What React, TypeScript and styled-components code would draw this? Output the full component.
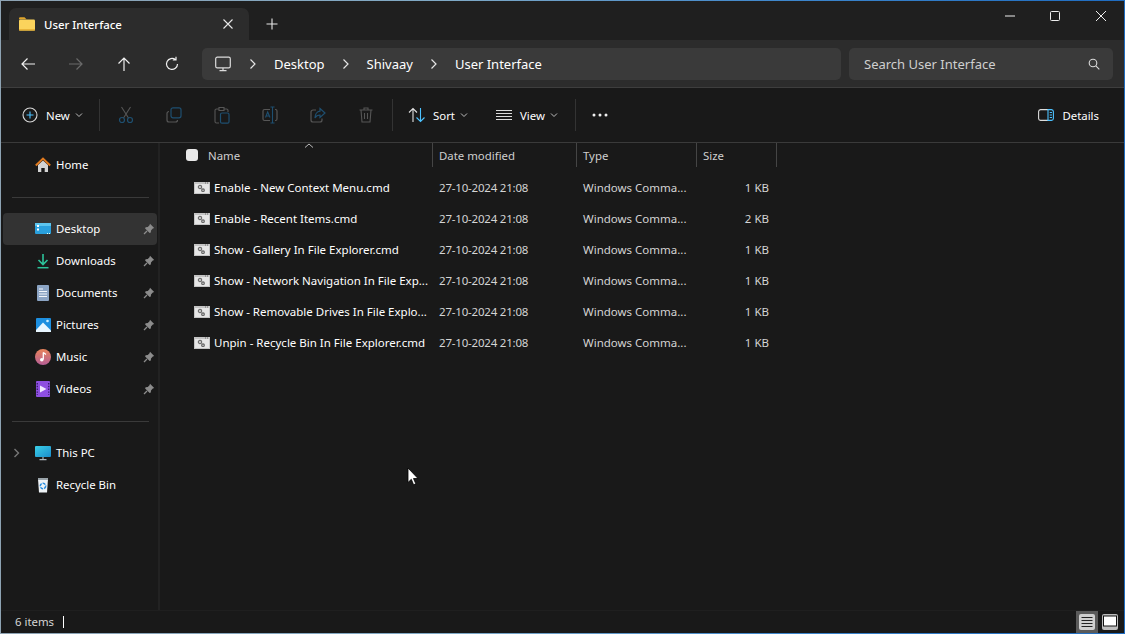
import React from "react";
import styled, { createGlobalStyle } from "styled-components";

const Global = createGlobalStyle`
  html, body { margin: 0; padding: 0; background: #191919; }
  * { box-sizing: border-box; }
`;

/* ---------------- Shell ---------------- */

const Win = styled.div`
  position: relative;
  width: 1125px;
  height: 634px;
  display: flex;
  flex-direction: column;
  overflow: hidden;
  background: #191919;
  color: #fff;
  font-family: "Noto Sans", "Liberation Sans", sans-serif;
  font-size: 11.4px;
  border-style: solid;
  border-width: 1px;
  border-image: linear-gradient(90deg, #8ea3b3 0%, #7fa9c6 40%, #3d86cc 70%, #1f6cc0 100%) 1;
`;

const Svg = styled.svg`
  display: block;
  flex: none;
  fill: none;
`;

/* ---------------- Title bar ---------------- */

const TitleBar = styled.div`
  height: 39px;
  flex: none;
  display: flex;
  align-items: flex-end;
  padding-left: 8px;
  background: #1f1f1f;
`;

const Tab = styled.div`
  width: 240px;
  height: 32px;
  display: flex;
  align-items: center;
  padding: 0 15px 0 9px;
  gap: 8px;
  background: #2c2c2c;
  border-radius: 7px 7px 0 0;
  font-weight: 500;
  span { flex: 1; }
`;

const NewTab = styled.div`
  width: 46px;
  height: 32px;
  display: flex;
  align-items: center;
  justify-content: center;
`;

const WinControls = styled.div`
  margin-left: auto;
  align-self: flex-start;
  display: flex;
  height: 30px;
  align-items: center;
`;

const WinBtn = styled.div<{ $w: number }>`
  width: ${(p) => p.$w}px;
  display: flex;
  justify-content: center;
`;

/* ---------------- Address bar ---------------- */

const AddressBar = styled.div`
  height: 48px;
  flex: none;
  display: flex;
  align-items: center;
  background: #2c2c2c;
  border-bottom: 1px solid #3e3e3e;
  padding: 1px 11px 0 3px;
`;

const NavBtn = styled.div`
  width: 48px;
  display: flex;
  justify-content: center;
`;

const Crumbs = styled.div`
  width: 639px;
  height: 32px;
  margin-left: 6px;
  display: flex;
  align-items: center;
  padding-left: 13px;
  background: #3a3a3a;
  border-radius: 5px;
  font-size: 13px;
`;

const PcGlyph = styled.div`
  margin-right: 18px;
`;

const CrumbText = styled.span`
  margin: 0 17px;
  white-space: nowrap;
`;

const Search = styled.div`
  flex: 1;
  height: 32px;
  margin-left: 8px;
  display: flex;
  align-items: center;
  justify-content: space-between;
  padding: 0 13px 0 15px;
  background: #3a3a3a;
  border-radius: 5px;
  color: #cfcfcf;
  font-size: 13px;
`;

/* ---------------- Command bar ---------------- */

const CommandBar = styled.div`
  height: 55px;
  flex: none;
  display: flex;
  align-items: center;
  background: #191919;
  border-bottom: 1px solid #3a3a3a;
  padding: 0 25px 0 5px;
`;

const Cmd = styled.div<{ $w: number; $pad?: number; $gap?: number }>`
  width: ${(p) => p.$w}px;
  display: flex;
  align-items: center;
  justify-content: ${(p) => (p.$pad ? "flex-start" : "center")};
  padding-left: ${(p) => p.$pad ?? 0}px;
  gap: ${(p) => p.$gap ?? 8}px;
`;

const CmdLabel = styled.span`
  display: flex;
  align-items: center;
  gap: 5px;
`;

const Sep = styled.div`
  width: 1px;
  height: 32px;
  margin: 0 2px;
  background: #333;
`;

const Details = styled.div`
  margin-left: auto;
  display: flex;
  align-items: center;
  gap: 8px;
`;

/* ---------------- Body ---------------- */

const Body = styled.div`
  flex: 1;
  display: flex;
  min-height: 0;
`;

const Sidebar = styled.div`
  width: 159px;
  flex: none;
  padding: 6px 1px 0 2px;
  border-right: 2px solid #222;
`;

const NavItem = styled.div<{ $active?: boolean }>`
  position: relative;
  height: 32px;
  display: flex;
  align-items: center;
  padding-left: 30px;
  gap: 3px;
  border-radius: 4px;
  background: ${(p) => (p.$active ? "#333" : "transparent")};
`;

const IconSlot = styled.div`
  width: 20px;
  display: flex;
  justify-content: center;
`;

const Caret = styled.div`
  position: absolute;
  left: 10px;
  top: 11px;
`;

const NavLabel = styled.span`
  flex: 1;
  padding-bottom: 2px;
`;

const PinSlot = styled.div`
  width: 14px;
`;

const NavRule = styled.div`
  height: 1px;
  margin: 16px 8px 15px 9px;
  background: #3a3a3a;
`;

const Content = styled.div`
  flex: 1;
  min-width: 0;
`;

const Grid = styled.div`
  display: grid;
  grid-template-columns: 273px 144px 120px 80px;
  width: 617px;
`;

const HeaderCell = styled.div<{ $pad: number }>`
  position: relative;
  height: 24px;
  display: flex;
  align-items: center;
  padding-left: ${(p) => p.$pad}px;
  border-right: 1px solid #454545;
  color: #cfcfcf;
`;

const SortUp = styled.div`
  position: absolute;
  left: 144px;
  top: 0;
`;

const Check = styled.div`
  width: 12px;
  height: 12px;
  margin-right: 10px;
  background: #e8e8e8;
  border-radius: 3px;
`;

const Rows = styled.div`
  padding-top: 5px;
  font-size: 11.5px;
`;

const Row = styled.div`
  display: grid;
  grid-template-columns: 273px 144px 120px 72px;
  width: 617px;
  height: 31px;
  align-items: center;
`;

const NameCell = styled.div`
  display: flex;
  align-items: center;
  gap: 4px;
  padding-left: 34px;
  white-space: nowrap;
`;

const Cell = styled.div<{ $right?: boolean; $tight?: boolean }>`
  padding-left: 6px;
  color: #d4d4d4;
  white-space: nowrap;
  text-align: ${(p) => (p.$right ? "right" : "left")};
  letter-spacing: ${(p) => (p.$tight ? "-0.2px" : "0")};
`;

const StatusBar = styled.div`
  height: 23px;
  flex: none;
  display: flex;
  align-items: center;
  padding: 0 3px 0 14px;
  background: #191919;
  color: #d4d4d4;
  border-top: 1px solid #1f1f1f;
`;

const StatusText = styled.span`
  padding-bottom: 2px;
`;

const StatusBarMark = styled.div`
  width: 1px;
  height: 12px;
  margin-left: 9px;
  background: #fff;
`;

const ViewSwitch = styled.div`
  margin-left: auto;
  display: flex;
  align-items: center;
  gap: 1px;
`;

const ViewBtn = styled.div<{ $on?: boolean }>`
  width: 22px;
  height: 22px;
  display: flex;
  align-items: center;
  justify-content: center;
  background: ${(p) => (p.$on ? "#5a5a5a" : "transparent")};
`;

const Pointer = styled.div`
  position: absolute;
  left: 406px;
  top: 466px;
`;

/* ---------------- Icons ---------------- */

const Chevron = ({ color = "#bdbdbd" }: { color?: string }) => (
  <Svg width="8" height="6" viewBox="0 0 8 6">
    <path d="M1 1.5 4 4.5 7 1.5" stroke={color} strokeWidth="1" />
  </Svg>
);

const Crumb = () => (
  <Svg width="8" height="12" viewBox="0 0 8 12">
    <path d="M1.5 1.5 6 6 1.5 10.5" stroke="#e6e6e6" strokeWidth="1.2" />
  </Svg>
);

const Arrow = ({ d, color = "#f0f0f0" }: { d: string; color?: string }) => (
  <Svg width="16" height="16" viewBox="0 0 16 16">
    <path d={d} stroke={color} strokeWidth="1.2" />
  </Svg>
);

const FolderIcon = () => (
  <Svg width="18" height="16" viewBox="0 0 18 16">
    <path d="M1 2.5A1.2 1.2 0 0 1 2.2 1.3h4.3l2 2H1Z" fill="#e0a52a" />
    <rect x="1" y="3.5" width="16" height="11" rx="1.2" fill="#fbd35c" />
    <rect x="1" y="13" width="16" height="1.6" fill="#e8b338" />
  </Svg>
);

const Pin = () => (
  <Svg width="12" height="12" viewBox="0 0 12 12">
    <path d="M7 .8 11.2 5 9.8 5.6 8 7.4 7.8 9.6 6.6 10 2.1 5.4 2.6 4.2 4.8 4 6.5 2.2Z" fill="#8c8c8c" />
    <path d="M4 8 1 11" stroke="#8c8c8c" strokeWidth="1.3" />
  </Svg>
);

const HomeIcon = () => (
  <Svg width="16" height="16" viewBox="0 0 16 16">
    <path d="M3 8 8 3.5 13 8V15H9.7V11H6.3V15H3Z" fill="#d4d4d4" />
    <path d="M.8 8.4 8 1.6 15.2 8.4" stroke="#e07a1f" strokeWidth="2" />
  </Svg>
);

const DesktopIcon = () => (
  <Svg width="16" height="14" viewBox="0 0 16 14">
    <rect y="1" width="16" height="11" rx="1" fill="#2aa0dd" />
    <rect y="1" width="16" height="3" fill="#5cc4ee" />
    <rect x="2" y="3" width="2" height="2" fill="#fff" />
    <rect x="2" y="6.5" width="2" height="2" fill="#fff" />
    <rect x="12" y="11" width="1" height="1" fill="#dff" />
    <rect x="14" y="11" width="1" height="1" fill="#dff" />
  </Svg>
);

const DownloadIcon = () => (
  <Svg width="16" height="16" viewBox="0 0 16 16">
    <path d="M8 1V11M3.5 7 8 11.5 12.5 7" stroke="#2cc39a" strokeWidth="1.6" />
    <path d="M2.5 14.7H13.5" stroke="#2cc39a" strokeWidth="1.5" />
  </Svg>
);

const DocumentIcon = () => (
  <Svg width="16" height="16" viewBox="0 0 16 16">
    <rect x="2" width="12" height="16" rx="1" fill="#8ba4c4" />
    <path d="M4 4H8M4 6.5H12M4 9H12M4 11.5H12" stroke="#f2f6fb" strokeWidth="1.1" />
  </Svg>
);

const PicturesIcon = () => (
  <Svg width="15" height="14" viewBox="0 0 15 14">
    <rect width="15" height="14" rx="1" fill="#1d8fe0" />
    <path d="M0 12 7 4.5 15 12.5V14H0Z" fill="#e8f6ff" />
    <circle cx="11.5" cy="3" r="1.3" fill="#cdeeff" />
  </Svg>
);

const MusicIcon = () => (
  <Svg width="16" height="16" viewBox="0 0 16 16">
    <defs>
      <linearGradient id="mus" x1="0" y1="0" x2="0" y2="1">
        <stop offset="0" stopColor="#e8835a" />
        <stop offset="1" stopColor="#b65f96" />
      </linearGradient>
    </defs>
    <circle cx="8" cy="8" r="8" fill="url(#mus)" />
    <path d="M8.3 3.5V10.5" stroke="#fff" strokeWidth="1.3" />
    <path d="M8.3 3.5 11 5.5" stroke="#fff" strokeWidth="1.3" />
    <circle cx="6.8" cy="10.8" r="1.8" fill="#fff" />
  </Svg>
);

const VideoIcon = () => (
  <Svg width="14" height="16" viewBox="0 0 14 16">
    <rect width="14" height="16" rx="1" fill="#8e4fe0" />
    <path d="M4 4.5 10.5 8 4 11.5Z" fill="#f0e8ff" />
    <path d="M1.3 2V14M12.7 2V14" stroke="#3a1f70" strokeWidth="1.4" strokeDasharray="1.4 1.4" />
  </Svg>
);

const PcIcon = () => (
  <Svg width="16" height="16" viewBox="0 0 16 16">
    <defs>
      <linearGradient id="pc" x1="0" y1="0" x2="1" y2="1">
        <stop offset="0" stopColor="#3bd0e8" />
        <stop offset="1" stopColor="#1a8ccc" />
      </linearGradient>
    </defs>
    <rect y="1" width="16" height="11" rx="1" fill="url(#pc)" />
    <path d="M8 12V14.5M4.5 14.7H11.5" stroke="#aab4bb" strokeWidth="1.2" />
  </Svg>
);

const BinIcon = () => (
  <Svg width="14" height="16" viewBox="0 0 14 16">
    <path d="M2 2H12L11 15.5H3Z" fill="#eef2f5" />
    <rect x="2" y="1" width="10" height="2" fill="#9aa4aa" />
    <circle cx="7" cy="9" r="2.7" stroke="#2a8fe0" strokeWidth="1.5" strokeDasharray="3 1" />
  </Svg>
);

const CmdFile = () => (
  <Svg width="16" height="12" viewBox="0 0 16 12">
    <rect width="16" height="12" fill="#c4c4c4" />
    <rect x="1" y="2" width="14" height="9" fill="#e6e6e6" />
    <rect x="11" y=".5" width="1" height="1" fill="#666" />
    <rect x="13" y=".5" width="1" height="1" fill="#666" />
    <circle cx="6" cy="5" r="1.6" stroke="#6e6e6e" strokeWidth="1.3" />
    <circle cx="9" cy="8.2" r="1.3" stroke="#5f5f5f" strokeWidth="1.2" />
  </Svg>
);

const files = [
  ["Enable - New Context Menu.cmd", "1 KB"],
  ["Enable - Recent Items.cmd", "2 KB"],
  ["Show - Gallery In File Explorer.cmd", "1 KB"],
  ["Show - Network Navigation In File Exp...", "1 KB"],
  ["Show - Removable Drives In File Explo...", "1 KB"],
  ["Unpin - Recycle Bin In File Explorer.cmd", "1 KB"],
];

const places: [string, React.ReactNode][] = [
  ["Desktop", <DesktopIcon />],
  ["Downloads", <DownloadIcon />],
  ["Documents", <DocumentIcon />],
  ["Pictures", <PicturesIcon />],
  ["Music", <MusicIcon />],
  ["Videos", <VideoIcon />],
];

const blue = "#1e4f70";
const gray = "#565656";

export default function App() {
  return (
    <Win>
      <Global />

      <TitleBar>
        <Tab>
          <FolderIcon />
          <span>User Interface</span>
          <Svg width="12" height="12" viewBox="0 0 12 12">
            <path d="M1.5 1.5 10.5 10.5M10.5 1.5 1.5 10.5" stroke="#e8e8e8" strokeWidth="1.1" />
          </Svg>
        </Tab>
        <NewTab>
          <Svg width="12" height="12" viewBox="0 0 12 12">
            <path d="M6 .5V11.5M.5 6H11.5" stroke="#e8e8e8" strokeWidth="1.1" />
          </Svg>
        </NewTab>
        <WinControls>
          <WinBtn $w={44}>
            <Svg width="12" height="12" viewBox="0 0 12 12">
              <path d="M1 6H11" stroke="#eee" strokeWidth="1" />
            </Svg>
          </WinBtn>
          <WinBtn $w={46}>
            <Svg width="12" height="12" viewBox="0 0 12 12">
              <rect x="1.5" y="1.5" width="9" height="9" rx="1" stroke="#eee" />
            </Svg>
          </WinBtn>
          <WinBtn $w={46}>
            <Svg width="12" height="12" viewBox="0 0 12 12">
              <path d="M1 1 11 11M11 1 1 11" stroke="#eee" strokeWidth="1" />
            </Svg>
          </WinBtn>
        </WinControls>
      </TitleBar>

      <AddressBar>
        <NavBtn>
          <Arrow d="M15 8H2M7.5 2.5 2 8 7.5 13.5" />
        </NavBtn>
        <NavBtn>
          <Arrow d="M1 8H14M8.5 2.5 14 8 8.5 13.5" color="#6a6a6a" />
        </NavBtn>
        <NavBtn>
          <Arrow d="M8 15V2M2.5 7.5 8 2 13.5 7.5" />
        </NavBtn>
        <NavBtn>
          <Arrow d="M13.5 8A5.5 5.5 0 1 1 11.5 3.7M12 .8V4H8.8" />
        </NavBtn>
        <Crumbs>
          <PcGlyph>
            <Svg width="16" height="16" viewBox="0 0 16 16">
              <rect x=".7" y="1.2" width="14.6" height="10.6" rx="1.6" stroke="#dcdcdc" strokeWidth="1.2" />
              <path d="M8 12V14.5M4.5 14.6H11.5" stroke="#dcdcdc" strokeWidth="1.2" />
            </Svg>
          </PcGlyph>
          <Crumb />
          <CrumbText>Desktop</CrumbText>
          <Crumb />
          <CrumbText>Shivaay</CrumbText>
          <Crumb />
          <CrumbText>User Interface</CrumbText>
        </Crumbs>
        <Search>
          <span>Search User Interface</span>
          <Svg width="12" height="12" viewBox="0 0 12 12">
            <circle cx="5" cy="5" r="3.8" stroke="#dcdcdc" strokeWidth="1.1" />
            <path d="M7.8 7.8 11.3 11.3" stroke="#dcdcdc" strokeWidth="1.1" />
          </Svg>
        </Search>
      </AddressBar>

      <CommandBar>
        <Cmd $w={91} $pad={16}>
          <Svg width="16" height="16" viewBox="0 0 16 16">
            <circle cx="8" cy="8" r="7" stroke="#d8d8d8" strokeWidth="1.1" />
            <path d="M8 4.5V11.5M4.5 8H11.5" stroke="#4cc2ff" strokeWidth="1.1" />
          </Svg>
          <CmdLabel>
            New
            <Chevron />
          </CmdLabel>
        </Cmd>
        <Sep />
        <Cmd $w={48}>
          <Svg width="16" height="18" viewBox="0 0 16 18">
            <path d="M3.5 1 10.5 12M12.5 1 5.5 12" stroke={gray} strokeWidth="1.1" />
            <circle cx="4" cy="14" r="2.5" stroke={blue} strokeWidth="1.2" />
            <circle cx="12" cy="14" r="2.5" stroke={blue} strokeWidth="1.2" />
          </Svg>
        </Cmd>
        <Cmd $w={48}>
          <Svg width="16" height="16" viewBox="0 0 16 16">
            <rect x="5" y=".8" width="10" height="10" rx="2" stroke={blue} strokeWidth="1.2" />
            <path d="M3 4.5A2 2 0 0 0 1 6.5V13A2 2 0 0 0 3 15H9.5A2 2 0 0 0 11.5 13" stroke={gray} strokeWidth="1.2" />
          </Svg>
        </Cmd>
        <Cmd $w={48}>
          <Svg width="16" height="18" viewBox="0 0 16 18">
            <path d="M5 3H2.5A1.5 1.5 0 0 0 1 4.5V15.5A1.5 1.5 0 0 0 2.5 17H5M5 1.5H10V4.5H5ZM10 3H12.5A1.5 1.5 0 0 1 14 4.5V6" stroke={gray} strokeWidth="1.1" />
            <rect x="6.5" y="7" width="8.5" height="10.2" rx="1.5" stroke={blue} strokeWidth="1.2" />
          </Svg>
        </Cmd>
        <Cmd $w={48}>
          <Svg width="16" height="18" viewBox="0 0 16 18">
            <path d="M8 3.5H2.5A1.5 1.5 0 0 0 1 5V13A1.5 1.5 0 0 0 2.5 14.5H8" stroke={gray} strokeWidth="1.2" />
            <path d="M13 3.5H13.5A1.5 1.5 0 0 1 15 5V13A1.5 1.5 0 0 1 13.5 14.5H13" stroke={gray} strokeWidth="1.2" />
            <path d="M8.5 1H12.5M10.5 1V17M8.5 17H12.5M3.5 11.5 5.7 6 8 11.5M4.3 10H7.2" stroke={blue} strokeWidth="1.1" />
          </Svg>
        </Cmd>
        <Cmd $w={48}>
          <Svg width="16" height="16" viewBox="0 0 16 16">
            <path d="M6 3H3A2 2 0 0 0 1 5V13A2 2 0 0 0 3 15H10A2 2 0 0 0 12 13V11.5" stroke={gray} strokeWidth="1.2" />
            <path d="M10 1.5 15 6 10 10.5V8C7.5 8 6 9 5 11 5 7.5 7 4.5 10 4.2Z" stroke={blue} strokeWidth="1.2" />
          </Svg>
        </Cmd>
        <Cmd $w={48}>
          <Svg width="14" height="16" viewBox="0 0 14 16">
            <path d="M.5 3H13.5M5 3V1H9V3M2 3 3 15H11L12 3M5.5 6V12M8.5 6V12" stroke={gray} strokeWidth="1.1" />
          </Svg>
        </Cmd>
        <Sep />
        <Cmd $w={88} $pad={13} $gap={7}>
          <Svg width="18" height="16" viewBox="0 0 18 16">
            <path d="M5 15V1.5M1 5.5 5 1.5 9 5.5" stroke="#e0e0e0" strokeWidth="1.1" />
            <path d="M12.5 1V14.5M8.5 10.5 12.5 14.5 16.5 10.5" stroke="#4cc2ff" strokeWidth="1.1" />
          </Svg>
          <CmdLabel>
            Sort
            <Chevron />
          </CmdLabel>
        </Cmd>
        <Cmd $w={90} $pad={13}>
          <Svg width="16" height="12" viewBox="0 0 16 12">
            <path d="M0 1.5H16M0 4.5H16M0 7.5H16M0 10.5H16" stroke="#dcdcdc" strokeWidth="1" />
          </Svg>
          <CmdLabel>
            View
            <Chevron />
          </CmdLabel>
        </Cmd>
        <Sep />
        <Cmd $w={44}>
          <Svg width="16" height="4" viewBox="0 0 16 4">
            <circle cx="2" cy="2" r="1.5" fill="#f0f0f0" />
            <circle cx="8" cy="2" r="1.5" fill="#f0f0f0" />
            <circle cx="14" cy="2" r="1.5" fill="#f0f0f0" />
          </Svg>
        </Cmd>
        <Details>
          <Svg width="16" height="12" viewBox="0 0 16 12">
            <path d="M10 .6H2.5A2 2 0 0 0 .6 2.5V9.5A2 2 0 0 0 2.5 11.4H10" stroke="#dcdcdc" strokeWidth="1.1" />
            <path d="M10 .6H13.5A2 2 0 0 1 15.4 2.5V9.5A2 2 0 0 1 13.5 11.4H10V.6ZM11.7 3.5H14M11.7 6H14M11.7 8.5H14" stroke="#4cc2ff" strokeWidth="1.1" />
          </Svg>
          <span>Details</span>
        </Details>
      </CommandBar>

      <Body>
        <Sidebar>
          <NavItem>
            <IconSlot><HomeIcon /></IconSlot>
            <NavLabel>Home</NavLabel>
          </NavItem>
          <NavRule />
          {places.map(([label, icon], i) => (
            <NavItem key={label} $active={i === 0}>
              <IconSlot>{icon}</IconSlot>
              <NavLabel>{label}</NavLabel>
              <PinSlot><Pin /></PinSlot>
            </NavItem>
          ))}
          <NavRule />
          <NavItem>
            <Caret>
              <Svg width="8" height="10" viewBox="0 0 8 10">
                <path d="M1.5 1 5.5 5 1.5 9" stroke="#777" strokeWidth="1.4" />
              </Svg>
            </Caret>
            <IconSlot><PcIcon /></IconSlot>
            <NavLabel>This PC</NavLabel>
          </NavItem>
          <NavItem>
            <IconSlot><BinIcon /></IconSlot>
            <NavLabel>Recycle Bin</NavLabel>
          </NavItem>
        </Sidebar>

        <Content>
          <Grid>
            <HeaderCell $pad={26}>
              <SortUp>
                <Svg width="10" height="5" viewBox="0 0 10 5">
                  <path d="M1 4.5 5 1 9 4.5" stroke="#bbb" />
                </Svg>
              </SortUp>
              <Check />
              Name
            </HeaderCell>
            <HeaderCell $pad={6}>Date modified</HeaderCell>
            <HeaderCell $pad={6}>Type</HeaderCell>
            <HeaderCell $pad={6}>Size</HeaderCell>
          </Grid>
          <Rows>
            {files.map(([name, size]) => (
              <Row key={name}>
                <NameCell>
                  <CmdFile />
                  {name}
                </NameCell>
                <Cell $tight>27-10-2024 21:08</Cell>
                <Cell>Windows Comma...</Cell>
                <Cell $right>{size}</Cell>
              </Row>
            ))}
          </Rows>
        </Content>
      </Body>

      <StatusBar>
        <StatusText>6 items</StatusText>
        <StatusBarMark />
        <ViewSwitch>
          <ViewBtn $on>
            <Svg width="16" height="16" viewBox="0 0 16 16">
              <rect width="16" height="16" rx="2" fill="#cfcfcf" />
              <path d="M2.5 3.5H13.5M2.5 6.5H13.5M2.5 9.5H13.5M2.5 12.5H13.5" stroke="#222" />
            </Svg>
          </ViewBtn>
          <ViewBtn>
            <Svg width="16" height="16" viewBox="0 0 16 16">
              <rect width="16" height="16" rx="2" fill="#bdbdbd" />
              <rect x="1.5" y="2" width="13" height="10" fill="#fff" stroke="#111" />
            </Svg>
          </ViewBtn>
        </ViewSwitch>
      </StatusBar>

      <Pointer>
        <Svg width="12" height="19" viewBox="0 0 12 19">
          <path d="M1 1V15.5L4.3 12.3 6.6 17.8 8.8 16.8 6.5 11.5H11Z" fill="#fff" stroke="#000" strokeWidth=".8" />
        </Svg>
      </Pointer>
    </Win>
  );
}
